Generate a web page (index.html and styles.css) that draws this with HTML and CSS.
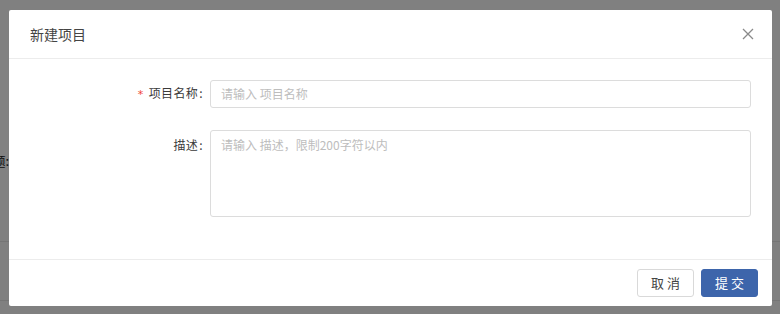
FILE: index.html
```html
<!DOCTYPE html>
<html lang="zh">
<head>
<meta charset="utf-8">
<title>新建项目</title>
<link rel="stylesheet" href="styles.css">
</head>
<body>
<div class="page">
  <div class="page-panel">
    <div class="page-row"><span class="page-label">标题:</span></div>
  </div>
  <div class="page-line line-a"></div>
  <div class="page-line line-b"></div>
</div>
<div class="mask"></div>
<div class="modal">
  <div class="modal-header">
    <span class="modal-title">新建项目</span>
    <svg class="close" width="12" height="12" viewBox="0 0 12 12"><path d="M1 1L11 11M11 1L1 11" stroke="#8a8a8a" stroke-width="1.3" fill="none"/></svg>
  </div>
  <div class="modal-body">
    <div class="form-row">
      <label class="form-label"><span class="req">*</span>项目名称<span class="colon">:</span></label>
      <div class="input">请输入 项目名称</div>
    </div>
    <div class="form-row">
      <label class="form-label top">描述<span class="colon">:</span></label>
      <div class="textarea">请输入 描述，限制200字符以内</div>
    </div>
  </div>
  <div class="modal-footer">
    <button class="btn">取 消</button>
    <button class="btn primary">提 交</button>
  </div>
</div>
</body>
</html>
```
FILE: styles.css
```css
* { box-sizing: border-box; }
html, body { margin: 0; padding: 0; }
body {
  width: 780px;
  height: 314px;
  overflow: hidden;
  background: #ffffff;
  font-family: "Noto Sans CJK SC", "Noto Sans", sans-serif;
  position: relative;
}
.page { width: 780px; height: 314px; background: #fbfbfb; position: relative; }
.page-panel {
  position: absolute; left: 0; top: 50px; width: 780px; height: 170px;
  background: #ffffff;
}
.page-row {
  padding-top: 101px;
  width: 9px; overflow: hidden;
  display: flex; justify-content: flex-end;
}
.page-label {
  flex-shrink: 0;
  font-size: 13px; color: #222; white-space: nowrap;
}
.page-line { position: absolute; left: 0; width: 780px; height: 1px; background: #e6e6e6; }
.line-a { top: 241px; }
.line-b { top: 300px; }
.mask {
  position: absolute; inset: 0;
  background: rgba(0,0,0,0.49);
}
.modal {
  position: absolute; left: 9px; top: 10px;
  width: 763px; height: 296px;
  background: #fff;
  border-radius: 2px;
  display: flex; flex-direction: column;
}
.modal-header {
  height: 49px;
  border-bottom: 1px solid #ececec;
  display: flex; align-items: center; justify-content: space-between;
  padding: 0 18px 0 21px;
}
.modal-title { font-size: 14px; color: #444; line-height: 20px; }
.close { display: block; margin-top: 0; }
.modal-body {
  height: 200px;
  padding: 21px 21px 0 0;
  display: flex; flex-direction: column; gap: 22px;
}
.form-row { display: flex; align-items: center; }
.form-label {
  width: 201px; padding-right: 0;
  text-align: right; font-size: 12px; color: #3a3a3a; line-height: 18px;
  letter-spacing: 0.4px;
}
.colon { display: inline-block; margin: 0 7px 0 1px; }
.form-label.top { align-self: flex-start; padding-top: 6px; }
.req { color: #f04134; margin-right: 5px; font-family: "DejaVu Sans", sans-serif; font-size: 11px; }
.input, .textarea {
  flex: 1;
  border: 1px solid #dcdcdc;
  border-radius: 3px;
  font-size: 12px; color: #bdbdbd;
  padding: 0 10px;
}
.input { height: 28px; line-height: 26px; }
.textarea { height: 87px; padding-top: 5px; line-height: 18px; }
.modal-footer {
  flex: 1;
  border-top: 1px solid #ececec;
  display: flex; justify-content: flex-end; align-items: flex-start;
  gap: 7px;
  padding: 9px 14px 0 0;
}
.btn {
  width: 57px; height: 28px;
  border: 1px solid #d9d9d9; border-radius: 3px;
  background: #fff; color: #444;
  font-family: "Noto Sans CJK SC", sans-serif; font-size: 13px;
  padding: 0; line-height: 26px; cursor: pointer;
}
.btn.primary { background: #3d65ab; border-color: #3d65ab; color: #fff; }
```
